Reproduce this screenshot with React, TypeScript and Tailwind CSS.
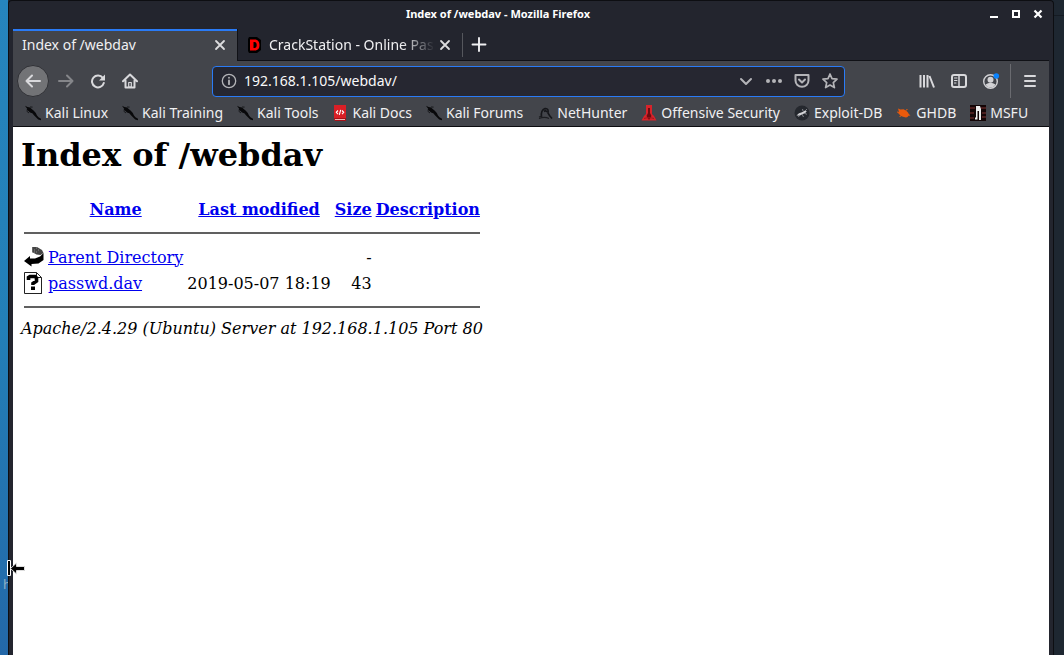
import React from "react";

const TEXT = "text-[#f0f0f2]";

function KaliIcon() {
  return (
    <svg viewBox="0 0 16 16" className="size-4 shrink-0" aria-hidden="true">
      <path d="M0 .8 2.500 2 5 2.400l2 1.800 1.800 1.600 2 2.200 1.200 2.600 1.500 1.700 2.500 1.400v1.600l-2.800-.8-2-2-2-2.100-1.900-2.200L5 7.600 3.500 6l-2-1 .8-1z" fill="#08080a" />
      <path d="M1.500 6 4 8M5 2l2.600.1" stroke="#17181b" strokeWidth="1" fill="none" />
    </svg>
  );
}

function DocsIcon() {
  return (
    <svg viewBox="0 0 16 16" className="size-4 shrink-0" aria-hidden="true">
      <path d="M2 0h12v16H3L2 14z" fill="#d91f26" />
      <path d="M2 13h12v3H3z" fill="#a81118" />
      <path d="M3 14.500h10" stroke="#efb9b9" strokeWidth="1" />
      <path d="M6 5.500 4.300 7.300 6 9.100M10 5.500l1.700 1.800L10 9.100M8.700 4.800 7.300 9.800" stroke="#fff" strokeWidth="1.100" fill="none" />
    </svg>
  );
}

function NetHunterIcon() {
  return (
    <svg viewBox="0 0 16 16" className="size-4 shrink-0" aria-hidden="true">
      <path d="M4.500 12C4 8 5 4.500 8 3.500c3-.3 3.500 2 3 4.500l1.500 2.500 2.500 3M7 6.500l1.500-1L10 7" fill="none" stroke="#15161a" strokeWidth="1.600" />
      <path d="M2 13.500c4-1.500 7-1.500 10 0M2 12l3-1" fill="none" stroke="#1c1d21" strokeWidth="1.200" />
    </svg>
  );
}

function OffsecIcon() {
  return (
    <svg viewBox="0 0 16 16" className="size-4 shrink-0" aria-hidden="true">
      <path d="M5 0h6v9l2 2 2.500 4.500H.5L3 11l2-2z" fill="#d8232a" />
      <path d="M7 3h2v5l1.500 3L8 15l-2.500-4L7 8z" fill="#6d0c10" />
      <path d="M3 13.500c3-1 7-1 10 0" stroke="#a0161b" fill="none" />
    </svg>
  );
}

function ExploitIcon() {
  return (
    <svg viewBox="0 0 16 16" className="size-4 shrink-0" aria-hidden="true">
      <circle cx="8" cy="8" r="7.500" fill="#25282e" />
      <path d="M2.500 10.500 5 8.300l3-1 2.600-1.600 2.200.4-1.500 1.900-2.900 1.300L6 10.500z" fill="#d4d4d7" />
      <path d="m9 6-.5-2M11 6l2-2M8 9l1.500 3M10.500 8.300l2.500 1M5.500 9.500 4.500 12" fill="none" stroke="#a9abaf" strokeWidth=".7" />
    </svg>
  );
}

function GhdbIcon() {
  return (
    <svg viewBox="0 0 16 16" className="size-4 shrink-0" aria-hidden="true">
      <path d="m2 3.500 2.500 1 3-.2L10 5.500l2 2 .8 1.500 1.700 1.500-2 .3-1 1.200-1.500.5L7 11.800 5 11 3.500 9.500 2 8l1-1z" fill="#e95a0c" />
      <path d="m1 7 2.500.5M5 11l-1.500.5M10 5l1.500-.5" stroke="#e95a0c" />
    </svg>
  );
}

function MsfuIcon() {
  return (
    <svg viewBox="0 0 16 16" className="size-4 shrink-0" aria-hidden="true">
      <path d="M0 0h16v16H0z" fill="#140607" />
      <path d="M0 3h5M11 3h5M0 8h4M12 8h4M0 13h4M12 12h4" stroke="#5d2626" strokeWidth="1.500" />
      <path d="M6 1h4l1 3v11H9V6H7.500v8.500H5V13l1-1z" fill="#eee" />
    </svg>
  );
}

const bookmarks = [
  { label: "Kali Linux", Icon: KaliIcon },
  { label: "Kali Training", Icon: KaliIcon },
  { label: "Kali Tools", Icon: KaliIcon },
  { label: "Kali Docs", Icon: DocsIcon },
  { label: "Kali Forums", Icon: KaliIcon },
  { label: "NetHunter", Icon: NetHunterIcon },
  { label: "Offensive Security", Icon: OffsecIcon },
  { label: "Exploit-DB", Icon: ExploitIcon },
  { label: "GHDB", Icon: GhdbIcon },
  { label: "MSFU", Icon: MsfuIcon },
];

function IconButton({ label, className = "w-8", children }: { label: string; className?: string; children: React.ReactNode }) {
  return (
    <button type="button" aria-label={label} className={`flex h-8 shrink-0 items-center justify-center ${className}`}>
      {children}
    </button>
  );
}

function Glyph({ children }: { children: React.ReactNode }) {
  return (
    <svg viewBox="0 0 16 16" className="size-4" fill="none" stroke="currentColor" strokeWidth="2" strokeLinecap="round" strokeLinejoin="round" aria-hidden="true">
      {children}
    </svg>
  );
}

function CloseTab() {
  return (
    <button type="button" aria-label="Close tab" className="flex size-5 shrink-0 items-center justify-center text-[#dcdcde]">
      <Glyph><path d="m4 4 8 8m0-8-8 8" strokeWidth="1.800" /></Glyph>
    </button>
  );
}

function TitleBar() {
  return (
    <div className="flex h-7 items-center pb-[2px] text-white">
      <div className="flex-1 text-center text-[11px] leading-4 font-bold">Index of /webdav - Mozilla Firefox</div>
      <button type="button" aria-label="Minimize" className="flex h-5 w-[22px] items-center justify-center">
        <svg viewBox="0 0 10 10" className="size-[10px]"><path d="M1 7h8v2H1z" fill="currentColor" /></svg>
      </button>
      <button type="button" aria-label="Maximize" className="flex h-5 w-[22px] items-center justify-center">
        <svg viewBox="0 0 10 10" className="size-[10px]"><path d="M2 2h6v6H2z" fill="none" stroke="currentColor" strokeWidth="2" /></svg>
      </button>
      <button type="button" aria-label="Close" className="flex h-5 w-[22px] items-center justify-center">
        <svg viewBox="0 0 10 10" className="size-[10px]"><path d="m1.500 1.500 7 7m0-7-7 7" stroke="currentColor" strokeWidth="2.200" /></svg>
      </button>
    </div>
  );
}

function TabStrip() {
  return (
    <div className={`flex h-8 border-b border-[#101116] text-sm ${TEXT}`}>
      <div className="-mb-px flex w-56 shrink-0 items-center border-t-2 border-[#2a7bf6] bg-[#43454b] pr-[7px] pb-[2px] pl-[9px]">
        <span className="flex-1 truncate">Index of /webdav</span>
        <CloseTab />
      </div>
      <div className="flex w-[225px] shrink-0 items-center border-l border-[#101116] pr-[7px] pl-[9px]">
        <svg viewBox="0 0 16 16" className="mr-[6px] size-4 shrink-0" aria-hidden="true">
          <path d="M2 0h8l4 3v10l-4 3H2l-1-2V2z" fill="#000" />
          <path d="M3 2.500h4.500C11.300 2.500 12.500 5 12.500 8s-1.200 5.500-5 5.500H3zM6.500 5v6h1c1.500 0 2.200-1.200 2.200-3S9 5 7.500 5z" fill="#f00" fillRule="evenodd" />
        </svg>
        <span className="flex-1 overflow-hidden whitespace-nowrap [mask-image:linear-gradient(to_right,black_80%,transparent)]">
          CrackStation - Online Pas
        </span>
        <CloseTab />
      </div>
      <div className="mt-1 h-6 w-px bg-[#55575d]" />
      <IconButton label="New tab"><Glyph><path d="M1.500 7.500h13M8 1v13" strokeWidth="1.900" /></Glyph></IconButton>
    </div>
  );
}

function NavBar() {
  return (
    <div className="flex h-10 items-center pr-[3px] pl-1 text-[#d9d9dc]">
      <button type="button" aria-label="Back" className="mr-px flex size-8 shrink-0 items-center justify-center rounded-full border border-[#303136] bg-[#727376]">
        <Glyph><path d="M15 8H1.500M7 2.500 1.500 8 7 13.500" /></Glyph>
      </button>
      <IconButton label="Forward" className="w-8 text-[#85868a]"><Glyph><path d="M1 8h13.500M9 2.500 14.500 8 9 13.500" /></Glyph></IconButton>
      <IconButton label="Reload">
        <Glyph>
          <path d="M12.800 4.800A6 6 0 1 0 13.800 10" />
          <path d="M15 1.500v6H9z" fill="currentColor" stroke="none" />
        </Glyph>
      </IconButton>
      <IconButton label="Home"><Glyph><path d="M1 8.300 8 1.500l7 6.800M3.500 7.500v7h9v-7" /><path d="M6.700 9.500h2.600V14H6.700z" strokeWidth="1.200" /></Glyph></IconButton>

      <div className="mx-[66px] flex h-[31px] flex-1 items-center rounded border border-[#2a7bf6] bg-[#262731] pl-2 text-[#b4b4b8]">
        <Glyph>
          <circle cx="8" cy="8" r="6.700" strokeWidth="1.300" />
          <path d="M8 7.500v3.700M8 4.700v.1" strokeWidth="1.800" />
        </Glyph>
        <input type="text" aria-label="Address" defaultValue="192.168.1.105/webdav/" className="ml-[7px] min-w-0 flex-1 bg-transparent text-sm text-[#f9f9fa] outline-none" />
        <IconButton label="Show history" className="w-7"><Glyph><path d="m3 6 5 5 5-5" /></Glyph></IconButton>
        <IconButton label="Page actions" className="w-7">
          <Glyph><g fill="currentColor" stroke="none"><circle cx="2" cy="8" r="2" /><circle cx="8" cy="8" r="2" /><circle cx="14" cy="8" r="2" /></g></Glyph>
        </IconButton>
        <IconButton label="Save to Pocket" className="w-7"><Glyph><path d="M1.500 2h13v5.500a6.500 6.300 0 0 1-13 0zM5 6.500l3 3 3-3" /></Glyph></IconButton>
        <IconButton label="Bookmark this page" className="w-7"><Glyph><path d="m8 1 2 4.700 5 .5-3.700 3.400 1.100 5L8 12l-4.400 2.600 1.100-5L1 6.200l5-.5z" strokeWidth="1.700" /></Glyph></IconButton>
      </div>

      <IconButton label="Library"><Glyph><path d="M1.500 2v12.500M5 2v12.500M8.500 2v12.500M10.500 3l4.500 11.500" strokeLinecap="butt" /></Glyph></IconButton>
      <IconButton label="Sidebars">
        <Glyph><rect x="1" y="2" width="14" height="12" rx="2" /><path d="M8 2v12" strokeWidth="1.500" /><path d="M3.500 5h2.500M3.500 7.500h2.500M3.500 10h1.500" strokeWidth="1" /></Glyph>
      </IconButton>
      <IconButton label="Account">
        <svg viewBox="0 0 18 18" className="size-[18px]" aria-hidden="true">
          <circle cx="8.500" cy="9.500" r="6.800" fill="none" stroke="#d2d2d5" strokeWidth="1.400" />
          <circle cx="8.500" cy="7.800" r="3" fill="#d2d2d5" />
          <path d="M3.500 12.500q5-3.500 10 0-1.500 3-5 3t-5-3" fill="#d2d2d5" />
          <circle cx="14.300" cy="4" r="2.800" fill="#0a84ff" />
        </svg>
      </IconButton>
      <div className="mr-[3px] ml-[3px] h-[34px] w-px bg-[#6a6b70]" />
      <IconButton label="Open menu"><Glyph><path d="M3 3h10M3 8h10M3 13h10" /></Glyph></IconButton>
    </div>
  );
}

function BookmarksBar() {
  return (
    <nav aria-label="Bookmarks" className="flex h-[26px] items-center gap-[14px] overflow-hidden border-b border-[#0c0c10] pb-[2px] pl-3">
      {bookmarks.map(({ label, Icon }) => (
        <a key={label} href="#" className={`flex shrink-0 items-center gap-1 text-sm ${TEXT}`}>
          <Icon />
          {label}
        </a>
      ))}
    </nav>
  );
}

function BackFileIcon() {
  return (
    <svg viewBox="0 0 20 22" className="block h-[22px] w-5" aria-hidden="true">
      <path d="M8 1h5l5 3 1.500 3-3 2-4-.5L8 6z" fill="#444" />
      <path d="M8 2h2M8 4h4M8 6h6M12 2h2M14 4h2" stroke="#888" strokeDasharray="1 1" />
      <path d="M19.500 7v7l-5 3.500-7 .5v2.500L0 15l6-5v2.500h5l5-2z" fill="#000" />
    </svg>
  );
}

function UnknownFileIcon() {
  return (
    <svg viewBox="0 0 20 22" className="block h-[22px] w-5" aria-hidden="true">
      <path d="M.5.5h12l5 5v16H.5z" fill="#fff" stroke="#222" />
      <path d="M12.500.5v5h5M17.500 6v15.500H1" fill="none" stroke="#222" />
      <path d="M4.500 8V5.500l1.500-1h5l1.500 1.500v3L9 11.500V13" fill="none" stroke="#000" strokeWidth="3.600" />
      <path d="M7 14.500h4V18H7z" fill="#000" />
    </svg>
  );
}

const LINK = "text-[#0000ee] underline";
const files = [
  { name: "Parent Directory", modified: "", size: "-", Icon: BackFileIcon },
  { name: "passwd.dav", modified: "2019-05-07 18:19", size: "43", Icon: UnknownFileIcon },
];

function Rule() {
  return (
    <tr>
      <td colSpan={5} className="p-px"><hr className="my-2 border-t-2 border-[#606060]" /></td>
    </tr>
  );
}

function Listing() {
  return (
    <main className="flex-1 bg-white px-2 pt-[9px] font-['DejaVu_Serif',serif] text-base leading-[19px] text-black">
      <h1 className="mb-[21px] text-[32px] leading-[38px] font-bold">Index of /webdav</h1>
      <table className="border-separate border-spacing-[2px] whitespace-nowrap">
        <thead>
          <tr>
            <td className="h-6 w-[22px] p-px" />
            {["Name", "Last modified", "Size", "Description"].map((heading) => (
              <th key={heading} scope="col" className="p-px"><a href="#" className={LINK}>{heading}</a></th>
            ))}
          </tr>
        </thead>
        <tbody>
          <Rule />
          {files.map(({ name, modified, size, Icon }) => (
            <tr key={name}>
              <td className="p-px"><Icon /></td>
              <td className="p-px"><a href="#" className={LINK}>{name}</a></td>
              <td className="p-px text-right">{modified}</td>
              <td className="p-px text-right">{size}</td>
              <td className="p-px" />
            </tr>
          ))}
          <Rule />
        </tbody>
      </table>
      <address className="italic">Apache/2.4.29 (Ubuntu) Server at 192.168.1.105 Port 80</address>
    </main>
  );
}

export default function App() {
  return (
    <div className="relative flex min-h-screen bg-[#1e2731] font-['Noto_Sans',sans-serif]">
      <div className="w-2 shrink-0 bg-linear-to-b from-[#2685bd] via-[#237fb7] to-[#2368a8]" />
      <div className="flex min-w-0 flex-1 flex-col rounded-t border border-b-0 border-[#0d0e12] bg-[#23252e] px-1">
        <TitleBar />
        <TabStrip />
        <div className="bg-[#43454b]">
          <NavBar />
          <BookmarksBar />
        </div>
        <Listing />
      </div>
      <div className="w-[10px] shrink-0 bg-[#1e2731]">
        <div className="h-4 border-b border-[#151b23]" />
      </div>
      <span className="absolute top-[576px] left-[3px] w-[5px] overflow-hidden text-[13px] leading-4 text-[#8fb0c4]">h</span>
      <svg viewBox="0 0 20 20" className="absolute top-[559px] left-[6px] size-5" aria-hidden="true">
        <path d="M1.500 1.500h3v15h-3z" fill="#000" stroke="#fff" />
        <path d="M4.500 9.500 10.500 4v3.500h8v4h-8V15z" fill="#000" stroke="#ddd" />
      </svg>
    </div>
  );
}
